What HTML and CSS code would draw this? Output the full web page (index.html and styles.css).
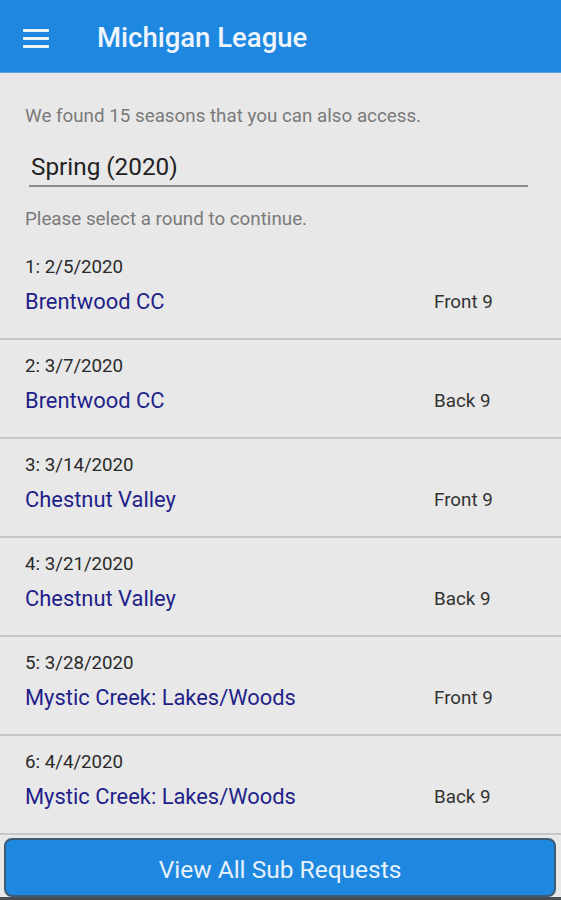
FILE: index.html
```html
<!DOCTYPE html>
<html lang="en">
<head>
    <meta charset="UTF-8">
    <meta name="viewport" content="width=device-width, initial-scale=1.0">
    <title>Michigan League</title>
    <link rel="stylesheet" href="styles.css">
</head>
<body>

    <div class="page">
        <div class="topbar">
            <span class="menu-btn">
                <svg width="26" height="22" viewBox="0 0 26 22">
                    <rect x="0" y="2" width="26" height="3" rx="1" fill="#eef5fd"/>
                    <rect x="0" y="10" width="26" height="3" rx="1" fill="#eef5fd"/>
                    <rect x="0" y="18" width="26" height="3" rx="1" fill="#eef5fd"/>
                </svg>
            </span>
            <span class="title">Michigan League</span>
        </div>

        <div class="content">
            <div class="intro">
                <p class="hint">We found 15 seasons that you can also access.</p>
                <div class="season">Spring (2020)</div>
                <p class="hint">Please select a round to continue.</p>
            </div>

            <div class="rounds">
                <div class="round">
                    <div class="date">1: 2/5/2020</div>
                    <div class="course">Brentwood CC</div>
                    <div class="nine">Front 9</div>
                </div>
                <div class="round">
                    <div class="date">2: 3/7/2020</div>
                    <div class="course">Brentwood CC</div>
                    <div class="nine">Back 9</div>
                </div>
                <div class="round">
                    <div class="date">3: 3/14/2020</div>
                    <div class="course">Chestnut Valley</div>
                    <div class="nine">Front 9</div>
                </div>
                <div class="round">
                    <div class="date">4: 3/21/2020</div>
                    <div class="course">Chestnut Valley</div>
                    <div class="nine">Back 9</div>
                </div>
                <div class="round">
                    <div class="date">5: 3/28/2020</div>
                    <div class="course">Mystic Creek: Lakes/Woods</div>
                    <div class="nine">Front 9</div>
                </div>
                <div class="round">
                    <div class="date">6: 4/4/2020</div>
                    <div class="course">Mystic Creek: Lakes/Woods</div>
                    <div class="nine">Back 9</div>
                </div>
            </div>
        </div>

        <div class="footer">
            <button type="button" class="sub-btn">View All Sub Requests</button>
        </div>
    </div>

</body>
</html>
```

FILE: styles.css
```css
body {
    margin: 0;
    font-family: Roboto, "Noto Sans", sans-serif;
    background-color: #e8e8e8;
}
.page {
    display: flex;
    flex-direction: column;
    height: 900px;
    overflow: hidden;
}
.topbar {
    display: flex;
    align-items: center;
    height: 73px;
    flex-shrink: 0;
    padding-top: 3px;
    background-color: #1e88e0;
    border-bottom: 1px solid #4fa0e6;
    box-sizing: border-box;
}
.menu-btn {
    display: flex;
    margin-left: 23px;
    margin-right: 48px;
}
.title {
    color: #eef5fd;
    font-size: 27.5px;
    font-weight: 500;
}
.content {
    flex: 1;
    overflow: hidden;
}
.intro {
    padding: 32px 33px 0 25px;
}
.hint {
    margin: 0;
    color: #7a7a7a;
    font-size: 18.8px;
    line-height: 22px;
}
.season {
    margin: 25px 0 21px 4px;
    padding: 0 0 3px 2px;
    border-bottom: 2px solid #8c8c8c;
    color: #222;
    font-size: 24.3px;
    line-height: 30px;
}
.rounds {
    margin-top: 11px;
}
.round {
    display: grid;
    grid-template-columns: 1fr 102px;
    row-gap: 12px;
    padding: 15px 25px 24px 25px;
    border-bottom: 2px solid #c6c6c6;
    align-items: center;
}
.date {
    grid-column: 1 / 3;
    color: #2a2a2a;
    font-size: 18.7px;
    line-height: 22px;
}
.course {
    color: #1f1f8a;
    font-size: 21.9px;
    line-height: 24px;
}
.nine {
    color: #333;
    font-size: 18.8px;
    line-height: 24px;
}
.footer {
    flex-shrink: 0;
    padding: 3px 5px 0 4px;
    border-bottom: 3px solid #4a4d50;
}
.sub-btn {
    display: block;
    width: 100%;
    height: 59px;
    padding-top: 4px;
    background-color: #1e88e0;
    border: 2px solid #3d5a74;
    border-radius: 8px;
    color: #e6f1fb;
    font-family: Roboto, "Noto Sans", sans-serif;
    font-size: 24.5px;
    cursor: pointer;
}
```
